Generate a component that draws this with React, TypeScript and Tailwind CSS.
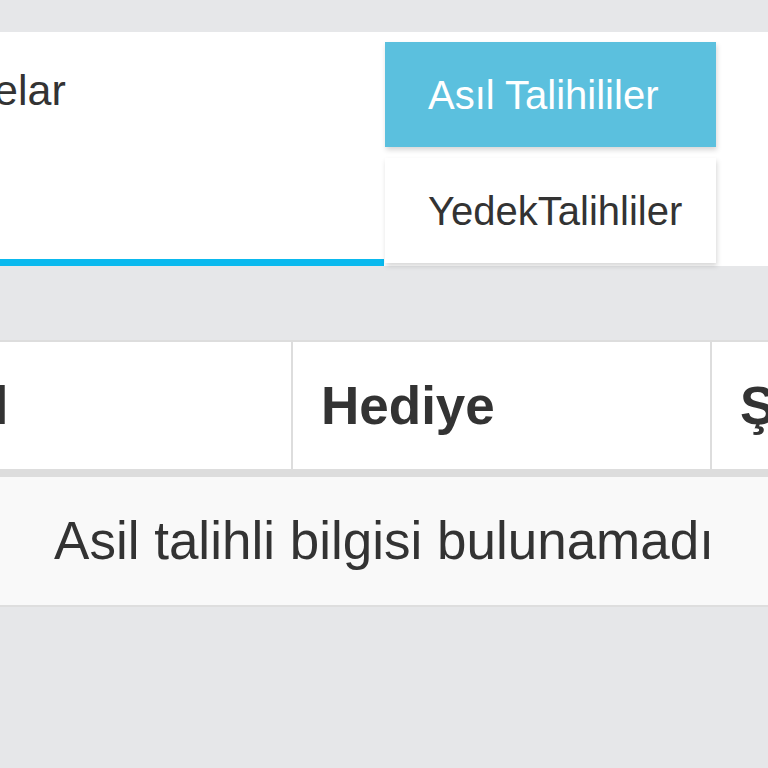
import React from "react";

export default function App() {
  const font = { fontFamily: '"Liberation Sans", Arial, Helvetica, sans-serif' };
  return (
    <div
      className="w-[768px] h-[768px] overflow-hidden bg-[#e6e7e9] pt-[32px] text-[#333333]"
      style={font}
    >
      {/* Tab panel */}
      <div className="flex h-[234px] bg-white">
        <div className="w-[384px] border-b-[7px] border-[#0ab9ee] pt-[37px] overflow-hidden">
          <div className="text-[43px] leading-none whitespace-nowrap -ml-[6px]">elar</div>
        </div>
        <div className="w-[332px] pt-[10px] pl-[1px]">
          <div className="flex flex-col gap-[11px]">
            <div className="h-[105px] bg-[#5bc0de] flex items-center pl-[43px] text-white text-[40px] shadow-[1px_3px_5px_rgba(0,0,0,0.16)]">
              Asıl Talihililer
            </div>
            <div className="h-[105px] bg-white flex items-center pl-[43px] text-[#333333] text-[40px] shadow-[1px_3px_5px_rgba(0,0,0,0.16)]">
              YedekTalihliler
            </div>
          </div>
        </div>
        <div className="flex-1" />
      </div>

      {/* Table */}
      <div className="mt-[74px] w-[1200px]">
        <div className="flex h-[127px] bg-white border-t-2 border-[#dddddd] border-b-[8px] box-content">
          <div className="w-[293px] shrink-0 border-r-2 border-[#dddddd] flex items-center overflow-hidden">
            <span className="text-[53px] font-bold whitespace-nowrap -ml-[21px]">İl</span>
          </div>
          <div className="w-[419px] shrink-0 border-r-2 border-[#dddddd] flex items-center pl-[28px]">
            <span className="text-[53px] font-bold whitespace-nowrap">Hediye</span>
          </div>
          <div className="flex-1 flex items-center pl-[28px]">
            <span className="text-[53px] font-bold whitespace-nowrap">Şans</span>
          </div>
        </div>
        <div className="w-[768px] h-[128px] bg-[#f9f9f9] border-b-2 border-[#dedede] box-content flex items-center justify-center">
          <span className="text-[53px] whitespace-nowrap">Asil talihli bilgisi bulunamadı</span>
        </div>
      </div>
    </div>
  );
}
